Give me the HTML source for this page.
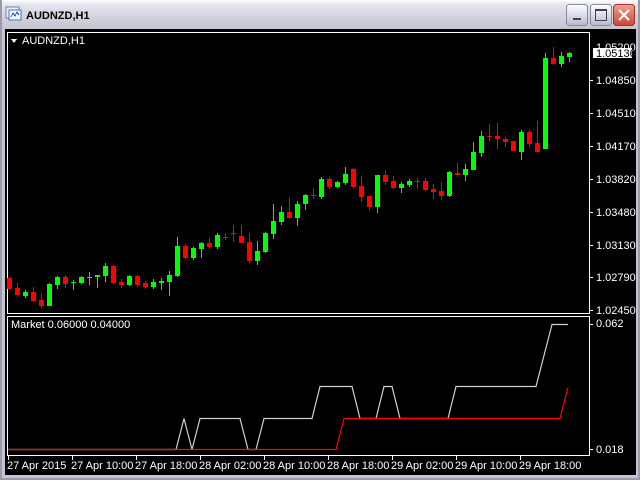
<!DOCTYPE html>
<html><head><meta charset="utf-8"><style>
html,body{margin:0;padding:0;width:640px;height:480px;overflow:hidden;background:#c8c8d4}
svg{display:block}
text{font-family:"Liberation Sans",sans-serif;font-size:11px}
</style></head><body>
<svg width="640" height="480" xmlns="http://www.w3.org/2000/svg" shape-rendering="crispEdges">
<defs>
<linearGradient id="tb" x1="0" y1="0" x2="0" y2="1">
<stop offset="0" stop-color="#ffffff"/><stop offset="0.15" stop-color="#e6e6ee"/><stop offset="0.6" stop-color="#d2d2de"/><stop offset="1" stop-color="#c4c4d0"/>
</linearGradient>
<linearGradient id="bt" x1="0" y1="0" x2="0" y2="1"><stop offset="0" stop-color="#ffffff"/><stop offset="1" stop-color="#b8b8cc"/></linearGradient>
<linearGradient id="cl" x1="0" y1="0" x2="0" y2="1"><stop offset="0" stop-color="#f0a090"/><stop offset="1" stop-color="#c84838"/></linearGradient>
</defs>
<rect x="0" y="0" width="640" height="480" fill="#c4c4d0"/>
<rect x="0" y="0" width="640" height="29" fill="url(#tb)"/>
<rect x="0" y="0" width="2" height="480" fill="#9a9aa8"/>
<rect x="638" y="0" width="2" height="480" fill="#9a9aa8"/>
<rect x="0" y="478" width="640" height="2" fill="#9a9aa8"/>
<rect x="6" y="7" width="13" height="11" fill="#e8f0ff" stroke="#6080c0"/>
<rect x="9" y="10" width="12" height="10" fill="#f4f8ff" stroke="#4a70b8"/>
<path d="M11 17 L13 13 L15 16 L17 12 L19 15" fill="none" stroke="#3050a0"/>
<text x="26" y="19" font-size="12" font-weight="bold" fill="#000">AUDNZD,H1</text>
<rect x="566.5" y="4.5" width="21" height="21" rx="3" fill="url(#bt)" stroke="#8888a0"/>
<rect x="573" y="18" width="8" height="2" fill="#404050"/>
<rect x="590.5" y="4.5" width="21" height="21" rx="3" fill="url(#bt)" stroke="#8888a0"/>
<rect x="595.5" y="9.5" width="11" height="11" fill="none" stroke="#404050"/>
<rect x="595" y="9" width="12" height="2" fill="#404050"/>
<rect x="613.5" y="4.5" width="21" height="21" rx="3" fill="url(#cl)" stroke="#a03828"/>
<path d="M619 10 L629 20 M629 10 L619 20" stroke="#fff" stroke-width="2" shape-rendering="auto"/>
<rect x="5" y="29" width="631" height="446" fill="#000"/>
<rect x="7.5" y="32.5" width="582" height="281" fill="none" stroke="#fff"/>
<rect x="7.5" y="316.5" width="582" height="139" fill="none" stroke="#fff"/>
<path d="M11 39 L17 39 L14 43 Z" fill="#fff"/>
<text x="22" y="44" fill="#fff" font-size="10">AUDNZD,H1</text>
<g fill="#fff" font-size="10">
<text x="596" y="51">1.05200</text>
<text x="596" y="84">1.04850</text>
<text x="596" y="117">1.04510</text>
<text x="596" y="150">1.04170</text>
<text x="596" y="183">1.03820</text>
<text x="596" y="216">1.03480</text>
<text x="596" y="249">1.03130</text>
<text x="596" y="281">1.02790</text>
<text x="596" y="314">1.02450</text>
<text x="596" y="327">0.062</text>
<text x="596" y="453">0.018</text>
</g>
<g fill="#fff">
<rect x="590" y="80" width="3" height="1"/><rect x="590" y="113" width="3" height="1"/><rect x="590" y="146" width="3" height="1"/><rect x="590" y="179" width="3" height="1"/><rect x="590" y="212" width="3" height="1"/><rect x="590" y="245" width="3" height="1"/><rect x="590" y="277" width="3" height="1"/><rect x="590" y="310" width="3" height="1"/><rect x="590" y="324" width="3" height="1"/><rect x="590" y="449" width="3" height="1"/>
</g>
<rect x="593" y="48" width="39" height="10" fill="#fff"/>
<text x="596" y="57" fill="#000" font-size="10">1.05136</text>
<g fill="#fff">
<rect x="8" y="456" width="1" height="4"/><rect x="72" y="456" width="1" height="4"/><rect x="136" y="456" width="1" height="4"/><rect x="200" y="456" width="1" height="4"/><rect x="264" y="456" width="1" height="4"/><rect x="328" y="456" width="1" height="4"/><rect x="392" y="456" width="1" height="4"/><rect x="456" y="456" width="1" height="4"/><rect x="520" y="456" width="1" height="4"/>
</g>
<g fill="#fff" font-size="10">
<text x="7" y="469">27 Apr 2015</text>
<text x="71" y="469">27 Apr 10:00</text>
<text x="135" y="469">27 Apr 18:00</text>
<text x="199" y="469">28 Apr 02:00</text>
<text x="263" y="469">28 Apr 10:00</text>
<text x="327" y="469">28 Apr 18:00</text>
<text x="391" y="469">29 Apr 02:00</text>
<text x="455" y="469">29 Apr 10:00</text>
<text x="519" y="469">29 Apr 18:00</text>
</g>
<text x="11" y="328" fill="#fff" font-size="10">Market 0.06000 0.04000</text>
<polyline shape-rendering="auto" fill="none" stroke="#d0d0d0" stroke-width="1.2" points="8,449.5 176,449.5 184,418.5 192,449.5 200,418.5 240,418.5 248,449.5 256,449.5 264,418.5 312,418.5 320,386.5 352,386.5 360,418.5 376,418.5 384,386.5 392,386.5 400,418.5 448,418.5 456,386.5 536,386.5 552,324.5 568,324.5"/>
<polyline shape-rendering="auto" fill="none" stroke="#ff0000" stroke-width="1.2" points="8,449.5 336,449.5 344,418.5 560,418.5 568,387.5"/>
<g fill="#00ff00">
<rect x="25" y="290" width="1" height="8"/><rect x="23" y="292" width="5" height="4"/>
<rect x="49" y="283" width="1" height="23"/><rect x="47" y="284" width="5" height="22"/>
<rect x="57" y="276" width="1" height="13"/><rect x="55" y="277" width="5" height="8"/>
<rect x="73" y="280" width="1" height="10"/><rect x="71" y="282" width="5" height="1"/>
<rect x="81" y="276" width="1" height="8"/><rect x="79" y="277" width="5" height="6"/>
<rect x="89" y="272" width="1" height="13"/><rect x="87" y="277" width="5" height="1"/>
<rect x="97" y="275" width="1" height="13"/><rect x="95" y="275" width="5" height="2"/>
<rect x="105" y="263" width="1" height="19"/><rect x="103" y="266" width="5" height="10"/>
<rect x="129" y="275" width="1" height="11"/><rect x="127" y="276" width="5" height="9"/>
<rect x="153" y="279" width="1" height="10"/><rect x="151" y="282" width="5" height="5"/>
<rect x="161" y="278" width="1" height="12"/><rect x="159" y="281" width="5" height="2"/>
<rect x="169" y="271" width="1" height="25"/><rect x="167" y="275" width="5" height="7"/>
<rect x="177" y="237" width="1" height="40"/><rect x="175" y="246" width="5" height="30"/>
<rect x="193" y="247" width="1" height="13"/><rect x="191" y="248" width="5" height="10"/>
<rect x="201" y="242" width="1" height="16"/><rect x="199" y="243" width="5" height="6"/>
<rect x="217" y="233" width="1" height="16"/><rect x="215" y="235" width="5" height="12"/>
<rect x="257" y="241" width="1" height="24"/><rect x="255" y="251" width="5" height="10"/>
<rect x="265" y="232" width="1" height="21"/><rect x="263" y="233" width="5" height="19"/>
<rect x="273" y="204" width="1" height="35"/><rect x="271" y="221" width="5" height="13"/>
<rect x="281" y="206" width="1" height="19"/><rect x="279" y="212" width="5" height="10"/>
<rect x="297" y="201" width="1" height="25"/><rect x="295" y="204" width="5" height="14"/>
<rect x="305" y="194" width="1" height="16"/><rect x="303" y="195" width="5" height="9"/>
<rect x="321" y="177" width="1" height="22"/><rect x="319" y="179" width="5" height="18"/>
<rect x="337" y="181" width="1" height="7"/><rect x="335" y="182" width="5" height="5"/>
<rect x="345" y="167" width="1" height="18"/><rect x="343" y="174" width="5" height="9"/>
<rect x="377" y="175" width="1" height="38"/><rect x="375" y="175" width="5" height="32"/>
<rect x="401" y="182" width="1" height="11"/><rect x="399" y="184" width="5" height="4"/>
<rect x="409" y="179" width="1" height="8"/><rect x="407" y="181" width="5" height="4"/>
<rect x="449" y="171" width="1" height="26"/><rect x="447" y="172" width="5" height="24"/>
<rect x="465" y="164" width="1" height="17"/><rect x="463" y="169" width="5" height="6"/>
<rect x="473" y="142" width="1" height="28"/><rect x="471" y="152" width="5" height="18"/>
<rect x="481" y="131" width="1" height="26"/><rect x="479" y="136" width="5" height="17"/>
<rect x="521" y="130" width="1" height="30"/><rect x="519" y="132" width="5" height="20"/>
<rect x="545" y="53" width="1" height="96"/><rect x="543" y="58" width="5" height="91"/>
<rect x="561" y="52" width="1" height="15"/><rect x="559" y="56" width="5" height="8"/>
<rect x="569" y="52" width="1" height="10"/><rect x="567" y="53" width="5" height="4"/>
</g>
<g fill="#ff0000">
<rect x="9" y="277" width="1" height="13"/><rect x="7" y="278" width="5" height="11"/>
<rect x="17" y="283" width="1" height="14"/><rect x="15" y="288" width="5" height="7"/>
<rect x="33" y="287" width="1" height="15"/><rect x="31" y="292" width="5" height="9"/>
<rect x="41" y="293" width="1" height="15"/><rect x="39" y="300" width="5" height="6"/>
<rect x="65" y="275" width="1" height="13"/><rect x="63" y="277" width="5" height="7"/>
<rect x="113" y="265" width="1" height="19"/><rect x="111" y="266" width="5" height="17"/>
<rect x="121" y="279" width="1" height="9"/><rect x="119" y="282" width="5" height="3"/>
<rect x="137" y="275" width="1" height="12"/><rect x="135" y="276" width="5" height="9"/>
<rect x="145" y="281" width="1" height="8"/><rect x="143" y="283" width="5" height="4"/>
<rect x="185" y="244" width="1" height="15"/><rect x="183" y="246" width="5" height="12"/>
<rect x="209" y="238" width="1" height="11"/><rect x="207" y="243" width="5" height="4"/>
<rect x="225" y="233" width="1" height="7"/><rect x="223" y="237" width="5" height="1"/>
<rect x="233" y="225" width="1" height="17"/><rect x="231" y="233" width="5" height="1"/>
<rect x="241" y="225" width="1" height="18"/><rect x="239" y="236" width="5" height="7"/>
<rect x="249" y="233" width="1" height="30"/><rect x="247" y="242" width="5" height="19"/>
<rect x="289" y="197" width="1" height="22"/><rect x="287" y="212" width="5" height="6"/>
<rect x="313" y="188" width="1" height="11"/><rect x="311" y="195" width="5" height="1"/>
<rect x="329" y="177" width="1" height="12"/><rect x="327" y="179" width="5" height="8"/>
<rect x="353" y="168" width="1" height="20"/><rect x="351" y="169" width="5" height="18"/>
<rect x="361" y="176" width="1" height="26"/><rect x="359" y="186" width="5" height="11"/>
<rect x="369" y="196" width="1" height="15"/><rect x="367" y="196" width="5" height="11"/>
<rect x="385" y="170" width="1" height="15"/><rect x="383" y="175" width="5" height="7"/>
<rect x="393" y="176" width="1" height="13"/><rect x="391" y="181" width="5" height="7"/>
<rect x="417" y="178" width="1" height="11"/><rect x="415" y="181" width="5" height="1"/>
<rect x="425" y="178" width="1" height="13"/><rect x="423" y="181" width="5" height="9"/>
<rect x="433" y="184" width="1" height="15"/><rect x="431" y="189" width="5" height="3"/>
<rect x="441" y="182" width="1" height="18"/><rect x="439" y="191" width="5" height="5"/>
<rect x="457" y="163" width="1" height="14"/><rect x="455" y="173" width="5" height="2"/>
<rect x="489" y="124" width="1" height="17"/><rect x="487" y="136" width="5" height="1"/>
<rect x="497" y="123" width="1" height="26"/><rect x="495" y="136" width="5" height="3"/>
<rect x="505" y="137" width="1" height="10"/><rect x="503" y="139" width="5" height="3"/>
<rect x="513" y="141" width="1" height="10"/><rect x="511" y="141" width="5" height="10"/>
<rect x="529" y="130" width="1" height="17"/><rect x="527" y="132" width="5" height="12"/>
<rect x="537" y="121" width="1" height="31"/><rect x="535" y="143" width="5" height="9"/>
<rect x="553" y="47" width="1" height="18"/><rect x="551" y="58" width="5" height="6"/>
</g>
</svg>
</body></html>
